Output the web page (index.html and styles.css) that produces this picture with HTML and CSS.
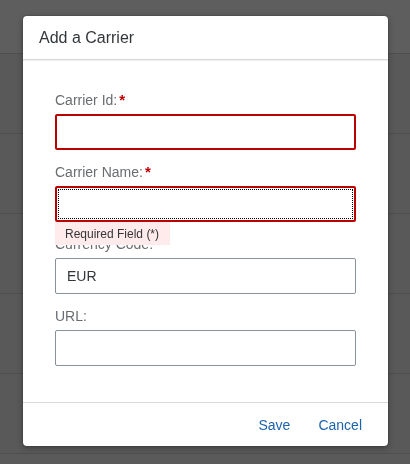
FILE: index.html
```html
<!DOCTYPE html>
<html lang="en">
<head>
<meta charset="utf-8">
<title>Add a Carrier</title>
<link rel="stylesheet" href="styles.css">
</head>
<body>
<div class="backdrop">
  <div class="bg-head"></div>
  <div class="bg-row"></div>
  <div class="bg-row"></div>
  <div class="bg-row"></div>
  <div class="bg-row"></div>
  <div class="bg-row"></div>
</div>
<div class="dialog" role="dialog">
  <header class="dialog-header">Add a Carrier</header>
  <div class="dialog-content">
    <div class="field">
      <label class="label">Carrier Id:<span class="req">*</span></label>
      <div class="input error"></div>
    </div>
    <div class="field has-tip">
      <label class="label">Carrier Name:<span class="req">*</span></label>
      <div class="input error focused"><span class="focus-ring"></span></div>
      <div class="tip">Required Field (*)</div>
    </div>
    <div class="field">
      <label class="label">Currency Code:</label>
      <div class="input">EUR</div>
    </div>
    <div class="field">
      <label class="label">URL:</label>
      <div class="input"></div>
    </div>
  </div>
  <footer class="dialog-footer">
    <button class="btn">Save</button>
    <button class="btn">Cancel</button>
  </footer>
</div>
</body>
</html>
```
FILE: styles.css
```css
html, body {
  margin: 0;
  padding: 0;
  height: 100%;
}
body {
  background: #5a5a5a;
  font-family: "Liberation Sans", Arial, sans-serif;
  overflow: hidden;
}
.backdrop {
  display: flex;
  flex-direction: column;
}
.bg-head {
  height: 53px;
  background: #5e5e5e;
  border-bottom: 1px solid #4f4f4f;
}
.bg-row {
  height: 79px;
  background: #595959;
  border-bottom: 1px solid #4f4f4f;
}
.dialog {
  position: fixed;
  left: 23px;
  top: 16px;
  width: 365px;
  height: 430px;
  background: #fff;
  border-radius: 4px;
  box-shadow: 0 0 2px rgba(0,0,0,0.35), 0 2px 6px rgba(0,0,0,0.3);
  display: flex;
  flex-direction: column;
  overflow: hidden;
}
.dialog-header {
  height: 43px;
  flex: none;
  display: flex;
  align-items: center;
  padding-left: 16px;
  font-size: 16px;
  color: #32363a;
  border-bottom: 1px solid #d9d9d9;
  box-shadow: 0 1px 1px rgba(0,0,0,0.06);
}
.dialog-content {
  flex: 1;
  padding: 31px 32px 0 32px;
  display: flex;
  flex-direction: column;
  gap: 13px;
}
.field {
  display: flex;
  flex-direction: column;
  gap: 5px;
  position: relative;
}
.has-tip {
  z-index: 2;
}
.label {
  font-size: 14px;
  line-height: 18px;
  height: 18px;
  color: #6a6d70;
}
.req {
  color: #bb0000;
  font-weight: bold;
  font-size: 15px;
  margin-left: 2px;
}
.input {
  height: 36px;
  box-sizing: border-box;
  border: 1px solid #89919a;
  border-radius: 2px;
  background: #fff;
  padding: 0 11px;
  display: flex;
  align-items: center;
  font-size: 14px;
  color: #32363a;
  position: relative;
}
.input.error {
  border: 2px solid #bb0000;
}
.focus-ring {
  position: absolute;
  inset: 1px;
  border: 1px dotted #000;
}
.tip {
  position: absolute;
  left: 0;
  top: 59px;
  height: 23px;
  padding: 0 11px 0 10px;
  display: flex;
  align-items: center;
  background: #ffebeb;
  color: #32363a;
  font-size: 12px;
}
.dialog-footer {
  height: 43px;
  flex: none;
  border-top: 1px solid #d9d9d9;
  display: flex;
  justify-content: flex-end;
  align-items: center;
  gap: 12px;
  padding-right: 18px;
}
.btn {
  background: none;
  border: none;
  padding: 0 8px;
  height: 32px;
  font-family: inherit;
  font-size: 14px;
  color: #1d64ae;
  cursor: pointer;
}
```
